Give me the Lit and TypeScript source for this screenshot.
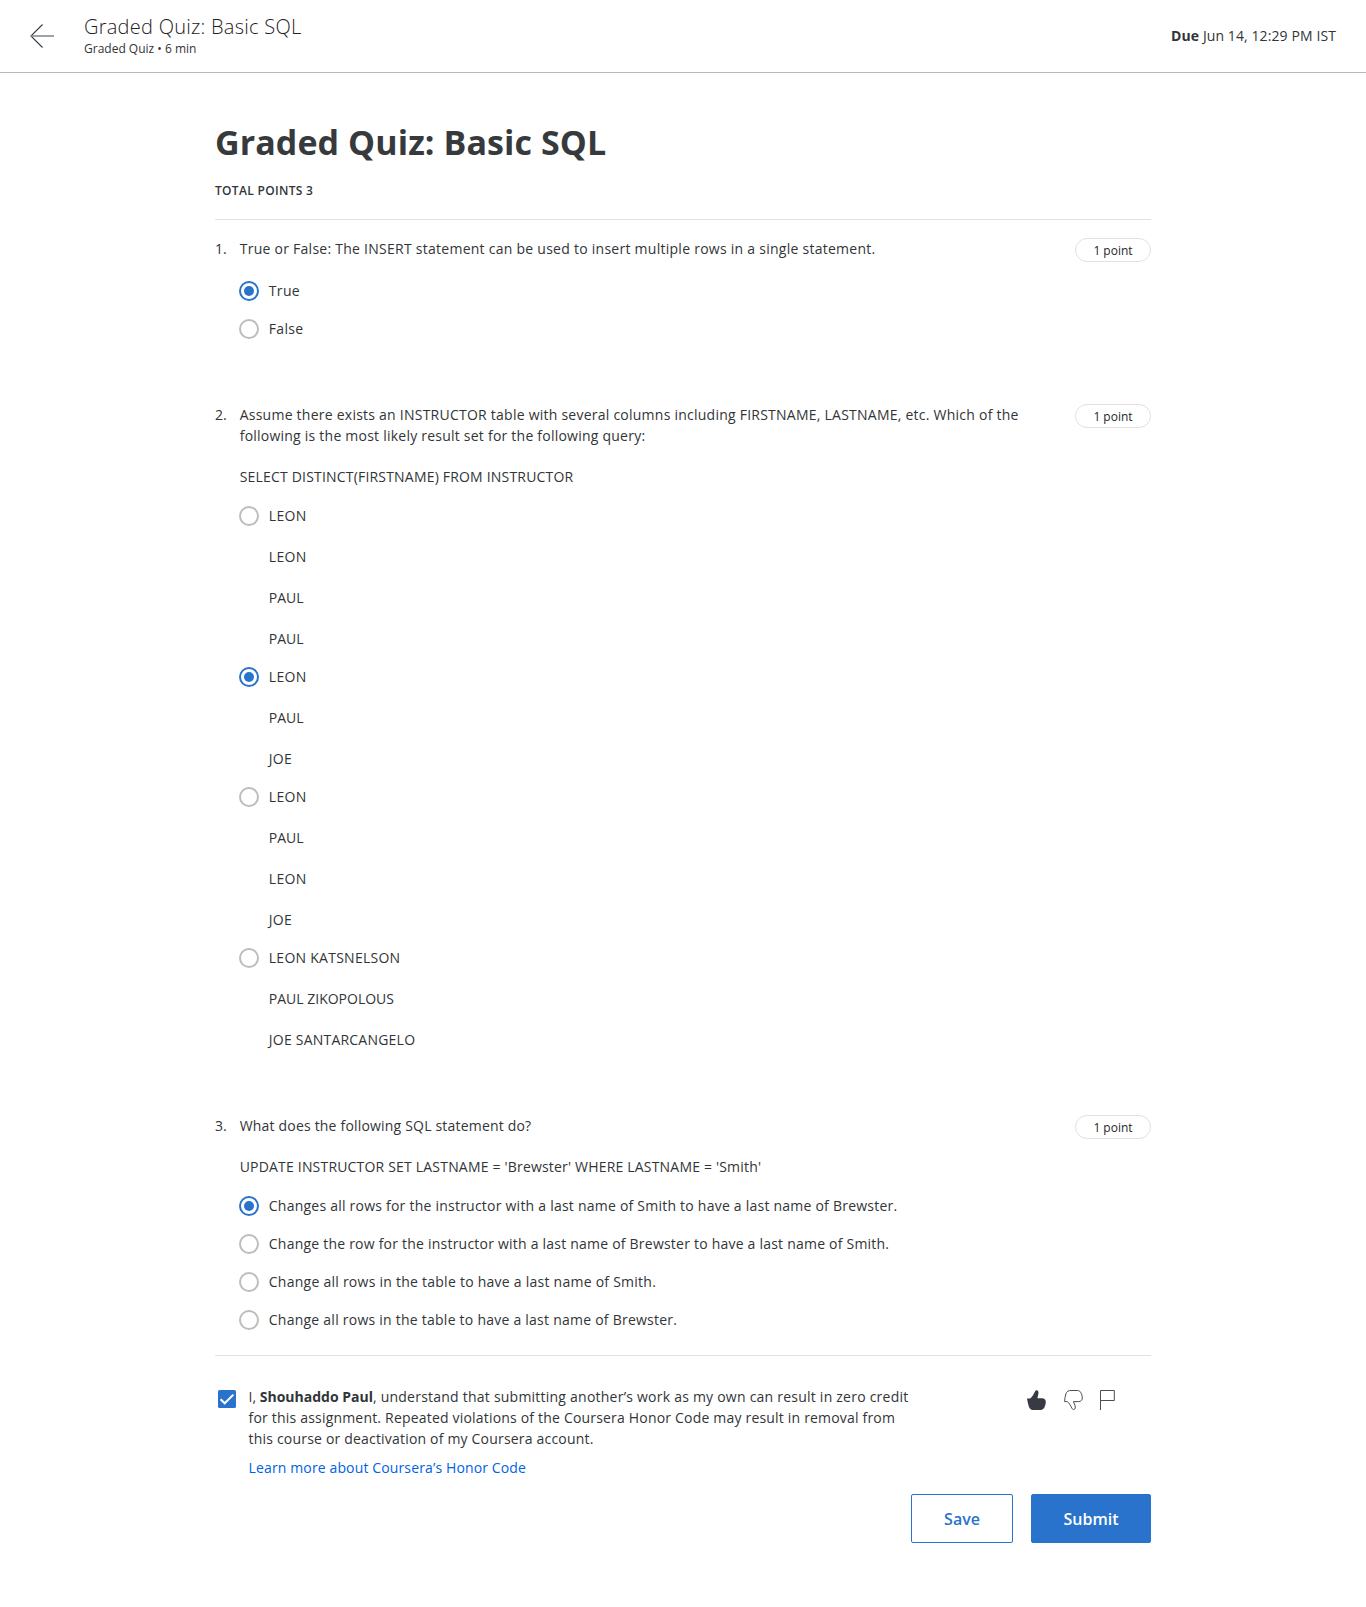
import { LitElement, html, css } from "lit";
import { customElement, property, state } from "lit/decorators.js";
import { classMap } from "lit/directives/class-map.js";

type Line = [text: string, tracking?: string];
interface Question {
  prompt: Line[];
  code?: Line;
  options: Line[][];
  selected: number;
}

const LEON: Line = ["LEON", "t34"];
const PAUL: Line = ["PAUL", "t0"];
const JOE: Line = ["JOE", "t26"];

const QUESTIONS: Question[] = [
  {
    prompt: [["True or False: The INSERT statement can be used to insert multiple rows in a single statement.", "t26"]],
    options: [[["True", "t34"]], [["False", "t34"]]],
    selected: 0,
  },
  {
    prompt: [
      ["Assume there exists an INSTRUCTOR table with several columns including FIRSTNAME, LASTNAME, etc. Which of the", "t24"],
      ["following is the most likely result set for the following query:", "t23"],
    ],
    code: ["SELECT DISTINCT(FIRSTNAME) FROM INSTRUCTOR", "t20"],
    options: [
      [LEON, LEON, PAUL, PAUL],
      [LEON, PAUL, JOE],
      [LEON, PAUL, LEON, JOE],
      [["LEON KATSNELSON", "t26"], ["PAUL ZIKOPOLOUS", "t0"], ["JOE SANTARCANGELO", "t22"]],
    ],
    selected: 1,
  },
  {
    prompt: [["What does the following SQL statement do?", "t20"]],
    code: ["UPDATE INSTRUCTOR SET LASTNAME = 'Brewster' WHERE LASTNAME = 'Smith'", "t20"],
    options: [
      [["Changes all rows for the instructor with a last name of Smith to have a last name of Brewster.", "t23"]],
      [["Change the row for the instructor with a last name of Brewster to have a last name of Smith.", "t22"]],
      [["Change all rows in the table to have a last name of Smith.", "t25"]],
      [["Change all rows in the table to have a last name of Brewster.", "t24"]],
    ],
    selected: 0,
  },
];

const tracking = css`
  .t0 { letter-spacing: 0; }
  .t14 { letter-spacing: 0.13px; }
  .t20 { letter-spacing: 0.19px; }
  .t22 { letter-spacing: 0.22px; }
  .t23 { letter-spacing: 0.23px; }
  .t24 { letter-spacing: 0.24px; }
  .t25 { letter-spacing: 0.25px; }
  .t26 { letter-spacing: 0.26px; }
  .t34 { letter-spacing: 0.34px; }
`;

const line = ([text, cls = ""]: Line) => html`<div class="line ${cls}">${text}</div>`;

@customElement("quiz-question")
export class QuizQuestion extends LitElement {
  @property({ type: Number }) number = 1;
  @property({ attribute: false }) question!: Question;
  @state() private picked = -1;

  static styles = [
    tracking,
    css`
      :host { display: grid; grid-template-columns: 24px 1fr; }
      .line { white-space: nowrap; }
      .head { display: flex; justify-content: space-between; align-items: flex-start; }
      .prompt { display: flex; flex-direction: column; padding-left: 0.7px; }
      .code { margin-top: 20px; }
      .pill {
        box-sizing: border-box; width: 76px; height: 24px; padding-top: 3px;
        border: 1px solid #e1e1e1; border-radius: 12px;
        font-size: 12px; line-height: 17px; text-align: center; color: #1f1f1f;
      }
      .options { display: flex; flex-direction: column; gap: 17px; margin-top: 18px; }
      .option { display: flex; gap: 9.8px; cursor: pointer; }
      .radio {
        box-sizing: border-box; flex: none; width: 20px; height: 20px; margin-top: 1px;
        border: 2px solid #bdbdbd; border-radius: 50%;
        display: grid; place-items: center;
      }
      .radio.on { border-color: #2a73cc; }
      .radio.on::after { content: ""; width: 10px; height: 10px; border-radius: 50%; background: #2a73cc; }
      .answer { display: flex; flex-direction: column; gap: 20px; }
    `,
  ];

  render() {
    const q = this.question;
    const current = this.picked < 0 ? q.selected : this.picked;
    return html`
      <div>${this.number}.</div>
      <div>
        <div class="head">
          <div class="prompt">
            ${q.prompt.map(line)}
            ${q.code ? html`<div class="code">${line(q.code)}</div>` : ""}
          </div>
          <div class="pill">1 point</div>
        </div>
        <div class="options">
          ${q.options.map(
            (lines, i) => html`<div class="option" @click=${() => (this.picked = i)}>
              <span class=${classMap({ radio: true, on: i === current })}></span>
              <div class="answer">${lines.map(line)}</div>
            </div>`
          )}
        </div>
      </div>
    `;
  }
}

@customElement("app-root")
export class AppRoot extends LitElement {
  static styles = [
    tracking,
    css`
      :host {
        display: block; min-height: 1607px; background: #fff; color: #323537;
        font: 14px/21px "Open Sans", "Noto Sans", sans-serif;
      }
      .bar {
        box-sizing: border-box; height: 73px; padding: 0 30px; border-bottom: 1px solid #b8b8b8;
        display: flex; align-items: flex-start;
      }
      .back { width: 24px; height: 24px; margin: 24px 30px 0 0; }
      .titles { flex: 1; padding-top: 13px; }
      .name { font-size: 20px; line-height: 27px; font-weight: 300; letter-spacing: 0.26px; color: #1f2123; }
      .meta { font-size: 12px; line-height: 17px; }
      .due { margin-top: 25px; letter-spacing: 0.1px; }
      b { font-weight: 700; }
      main { width: 936px; margin: 46px auto 0; }
      h1 { margin: 0; font-size: 34px; line-height: 46px; font-weight: 700; letter-spacing: 0.08px; color: #373a3c; }
      .total {
        margin-top: 17px; padding-bottom: 20px; border-bottom: 1px solid #e1e1e1;
        font-size: 12px; line-height: 17px; font-weight: 600; letter-spacing: 0.32px;
      }
      .questions {
        display: flex; flex-direction: column; gap: 65px;
        padding: 18px 0 25px; border-bottom: 1px solid #e1e1e1;
      }
      .honor { display: flex; padding-top: 30px; }
      .check { flex: none; width: 18px; height: 18px; margin: 4px 12.6px 0 3px; }
      .pledge { flex: 1; }
      .line { white-space: nowrap; }
      .bold { letter-spacing: 0; }
      .link { margin-top: 8px; color: #0062e4; }
      .feedback { display: flex; padding: 4px 36px 0 0; }
      .up, .down { width: 19px; height: 20px; margin-right: 18px; }
      .down { margin-right: 17px; }
      .flag { width: 15px; height: 20px; }
      .actions { display: flex; justify-content: flex-end; gap: 18px; margin-top: 16px; }
      .btn {
        box-sizing: border-box; width: 102px; height: 49px; padding: 0;
        border: 1px solid #2a73cc; border-radius: 2px; background: #fff; color: #2a73cc;
        font: 600 16px/22px "Open Sans", "Noto Sans", sans-serif;
      }
      .primary { width: 120px; background: #2a73cc; color: #fff; }
    `,
  ];

  render() {
    return html`
      <header class="bar">
        <svg class="back" viewBox="0 0 24 24" fill="none" stroke="#373a3c">
          <path d="M12.5.5.9 12l11.6 11.5" stroke-width="1.1" />
          <path d="M1 12h23" stroke="#858b91" stroke-width="1.6" />
        </svg>
        <div class="titles">
          <div class="name">Graded Quiz: Basic SQL</div>
          <div class="meta">Graded Quiz • 6 min</div>
        </div>
        <div class="due"><b>Due</b> Jun 14, 12:29 PM IST</div>
      </header>
      <main>
        <h1>Graded Quiz: Basic SQL</h1>
        <div class="total">TOTAL POINTS 3</div>
        <section class="questions">
          ${QUESTIONS.map((q, i) => html`<quiz-question .number=${i + 1} .question=${q}></quiz-question>`)}
        </section>
        <section class="honor">
          <svg class="check" viewBox="0 0 18 18">
            <rect width="18" height="18" rx="1.5" fill="#2a73cc" />
            <path d="M2.6 9.2 6.7 13.3 15.4 4.6" fill="none" stroke="#fff" stroke-width="2" />
          </svg>
          <div class="pledge">
            <div class="line t23"><span class="bold">I, <b>Shouhaddo Paul</b></span>, understand that submitting another’s work as my own can result in zero credit</div>
            <div class="line t20">for this assignment. Repeated violations of the Coursera Honor Code may result in removal from</div>
            <div class="line t20">this course or deactivation of my Coursera account.</div>
            <div class="line link t14">Learn more about Coursera’s Honor Code</div>
          </div>
          <div class="feedback">
            <svg class="up" viewBox="0 0 19 20" fill="#373a42">
              <path d="M0 8.4H3.2C5 7.4 6.8 3.8 8 1.5 8.6.2 9.5 0 10.3.5 11.7 1.1 11.7 2.6 11.3 4.2L10.4 8.2H15.2C17.4 8.2 18.8 9.7 18.8 11.8 18.8 13.4 18.4 15.2 17.8 16.6 16.9 18.8 15.8 20 13.4 20H7C4.2 20 2.6 18.9 1.8 16.4 1 13.8.5 11.2 0 8.4Z" />
            </svg>
            <svg class="down" viewBox="0 0 19 20" fill="none" stroke="#4b4e57" stroke-linejoin="round">
              <path d="M.6 11.6H3.3C5.2 12.8 6.7 16 7.9 18.2 8.5 19.4 9.3 19.8 10.1 19.4 11.5 18.9 11.5 17.3 11.1 15.8L9.4 11.6H14.8C17 11.6 18.3 10 18.3 7.9 18.3 6.3 17.9 4.9 17.3 3.5 16.4 1.4 15.3.5 13.2.5H7C4.4.5 2.8 1.4 2 3.6 1.2 6.2.6 8.8.6 11.6Z" />
            </svg>
            <svg class="flag" viewBox="0 0 15 20" fill="none" stroke="#4b4e57">
              <path d="M.5 20V.5H14.3V10.5H.5" />
            </svg>
          </div>
        </section>
        <div class="actions">
          <button class="btn">Save</button>
          <button class="btn primary">Submit</button>
        </div>
      </main>
    `;
  }
}
